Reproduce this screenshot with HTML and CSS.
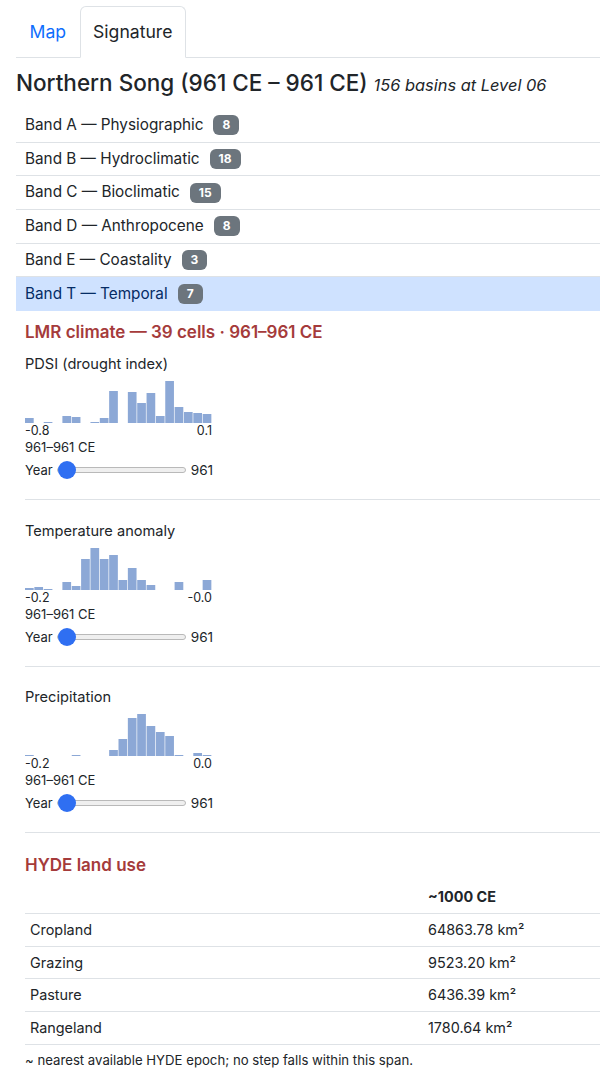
FILE: index.html
```html
<!DOCTYPE html>
<html lang="en">
<head>
    <meta charset="UTF-8">
    <meta name="viewport" content="width=device-width, initial-scale=1.0">
    <title>Northern Song - Signature</title>
    <link rel="stylesheet" href="styles.css">
</head>
<body>
    <ul class="tabs">
        <li><a href="#" class="tab-link">Map</a></li>
        <li><a href="#" class="tab-link active">Signature</a></li>
    </ul>

    <h4 class="title">Northern Song (961 CE – 961 CE) <small class="subtitle">156 basins at Level 06</small></h4>

    <ul class="bands">
        <li class="band">Band A — Physiographic<span class="badge">8</span></li>
        <li class="band">Band B — Hydroclimatic<span class="badge">18</span></li>
        <li class="band">Band C — Bioclimatic<span class="badge">15</span></li>
        <li class="band">Band D — Anthropocene<span class="badge">8</span></li>
        <li class="band">Band E — Coastality<span class="badge">3</span></li>
        <li class="band active">Band T — Temporal<span class="badge">7</span></li>
    </ul>

    <div class="temporal">
        <h6 class="section-title">LMR climate — 39 cells · 961–961 CE</h6>

        <div class="var-block">
            <div class="var-label">PDSI (drought index)</div>
            <svg class="hist" width="187" height="44" viewBox="0 0 187 44">
                <rect x="0" y="39" width="8.7" height="5"/>
                <rect x="18.7" y="43" width="8.7" height="1"/>
                <rect x="37.4" y="37" width="8.7" height="7"/>
                <rect x="46.75" y="38" width="8.7" height="6"/>
                <rect x="65.45" y="43" width="8.7" height="1"/>
                <rect x="74.8" y="39" width="8.7" height="5"/>
                <rect x="84.15" y="12" width="8.7" height="32"/>
                <rect x="102.85" y="13" width="8.7" height="31"/>
                <rect x="112.2" y="24" width="8.7" height="20"/>
                <rect x="121.55" y="14" width="8.7" height="30"/>
                <rect x="130.9" y="37" width="8.7" height="7"/>
                <rect x="140.25" y="2" width="8.7" height="42"/>
                <rect x="149.6" y="28" width="8.7" height="16"/>
                <rect x="158.95" y="33" width="8.7" height="11"/>
                <rect x="168.3" y="34" width="8.7" height="10"/>
                <rect x="177.65" y="35" width="8.7" height="9"/>
            </svg>
            <div class="axis"><span>-0.8</span><span>0.1</span></div>
            <div class="range-label">961–961 CE</div>
            <div class="year-row">
                <span>Year</span>
                <input type="range" class="year-slider" min="961" max="961" value="961">
                <span class="year-value">961</span>
            </div>
        </div>

        <div class="var-block">
            <div class="var-label">Temperature anomaly</div>
            <svg class="hist" width="187" height="44" viewBox="0 0 187 44">
                <rect x="0" y="42" width="8.7" height="2"/>
                <rect x="9.35" y="41" width="8.7" height="3"/>
                <rect x="18.7" y="43" width="8.7" height="1"/>
                <rect x="37.4" y="36" width="8.7" height="8"/>
                <rect x="46.75" y="40" width="8.7" height="4"/>
                <rect x="56.1" y="13" width="8.7" height="31"/>
                <rect x="65.45" y="2" width="8.7" height="42"/>
                <rect x="74.8" y="13" width="8.7" height="31"/>
                <rect x="84.15" y="9" width="8.7" height="35"/>
                <rect x="93.5" y="34" width="8.7" height="10"/>
                <rect x="102.85" y="22" width="8.7" height="22"/>
                <rect x="112.2" y="34" width="8.7" height="10"/>
                <rect x="121.55" y="39" width="8.7" height="5"/>
                <rect x="149.6" y="36" width="8.7" height="8"/>
                <rect x="177.65" y="34" width="8.7" height="10"/>
            </svg>
            <div class="axis"><span>-0.2</span><span>-0.0</span></div>
            <div class="range-label">961–961 CE</div>
            <div class="year-row">
                <span>Year</span>
                <input type="range" class="year-slider" min="961" max="961" value="961">
                <span class="year-value">961</span>
            </div>
        </div>

        <div class="var-block">
            <div class="var-label">Precipitation</div>
            <svg class="hist" width="187" height="44" viewBox="0 0 187 44">
                <rect x="0" y="43" width="8.7" height="1"/>
                <rect x="46.75" y="43" width="8.7" height="1"/>
                <rect x="84.15" y="38" width="8.7" height="6"/>
                <rect x="93.5" y="27" width="8.7" height="17"/>
                <rect x="102.85" y="6" width="8.7" height="38"/>
                <rect x="112.2" y="2" width="8.7" height="42"/>
                <rect x="121.55" y="14" width="8.7" height="30"/>
                <rect x="130.9" y="20" width="8.7" height="24"/>
                <rect x="140.25" y="24" width="8.7" height="20"/>
                <rect x="149.6" y="43" width="8.7" height="1"/>
                <rect x="168.3" y="41" width="8.7" height="3"/>
                <rect x="177.65" y="43" width="8.7" height="1"/>
            </svg>
            <div class="axis"><span>-0.2</span><span>0.0</span></div>
            <div class="range-label">961–961 CE</div>
            <div class="year-row">
                <span>Year</span>
                <input type="range" class="year-slider" min="961" max="961" value="961">
                <span class="year-value">961</span>
            </div>
        </div>

        <h6 class="section-title hyde-title">HYDE land use</h6>
        <table class="hyde">
            <thead>
                <tr><th class="col-label"></th><th>~1000 CE</th></tr>
            </thead>
            <tbody>
                <tr><td>Cropland</td><td>64863.78 km²</td></tr>
                <tr><td>Grazing</td><td>9523.20 km²</td></tr>
                <tr><td>Pasture</td><td>6436.39 km²</td></tr>
                <tr><td>Rangeland</td><td>1780.64 km²</td></tr>
            </tbody>
        </table>
        <p class="note">~ nearest available HYDE epoch; no step falls within this span.</p>
    </div>
</body>
</html>
```

FILE: styles.css
```css
body {
    font-family: Inter, "Liberation Sans", Arial, sans-serif;
    margin: 0;
    padding: 6px 0 0 16px;
    background-color: #fff;
    color: #212529;
}

.tabs {
    display: flex;
    list-style: none;
    margin: 0;
    padding: 0;
    border-bottom: 1px solid #dee2e6;
}

.tab-link {
    display: block;
    padding: 12px 12.5px;
    line-height: 26px;
    font-size: 17.6px;
    color: #0d6efd;
    text-decoration: none;
    border: 1px solid transparent;
    border-radius: 6px 6px 0 0;
    margin-bottom: -1px;
}

.tab-link.active {
    color: #212529;
    background-color: #fff;
    border-color: #dee2e6 #dee2e6 #fff;
}

.title {
    margin: 11px 0 10px;
    font-size: 22.5px;
    font-weight: 500;
    line-height: 28px;
}

.subtitle {
    font-size: 16.4px;
    font-weight: 400;
    font-style: italic;
}

.bands {
    list-style: none;
    margin: 0;
    padding: 0;
}

.band {
    display: flex;
    align-items: center;
    padding: 6px 9px;
    line-height: 20.67px;
    font-size: 15.3px;
    border-bottom: 1px solid #dee2e6;
}

.band.active {
    background-color: #cfe2ff;
    color: #052c65;
    border-bottom: none;
    height: 21.67px;
}

.badge {
    margin-left: 10px;
    background-color: #6c757d;
    color: #fff;
    font-size: 12px;
    font-weight: 700;
    line-height: 12px;
    padding: 4px 9px;
    border-radius: 6px;
}

.temporal {
    padding-left: 9px;
}

.section-title {
    margin: 11px 0 0;
    font-size: 17px;
    font-weight: 600;
    line-height: 20px;
    color: #a53b3b;
}

.var-block {
    padding: 21.5px 0 19px;
    border-bottom: 1px solid #dee2e6;
}

.section-title + .var-block {
    padding-top: 13px;
}

.var-label {
    font-size: 14.6px;
    line-height: 18px;
    margin-bottom: 6px;
}

.hist {
    display: block;
    fill: #8ca8d6;
}

.axis {
    display: flex;
    justify-content: space-between;
    width: 187px;
    margin-top: 1px;
    font-size: 12.5px;
    line-height: 14px;
}

.range-label {
    margin-top: 1px;
    font-size: 13px;
    line-height: 16px;
}

.year-row {
    display: flex;
    align-items: center;
    gap: 4px;
    margin-top: 5px;
    height: 20px;
    font-size: 13px;
}

.year-value {
    margin-left: 1px;
    font-size: 13.6px;
}

.year-slider {
    -webkit-appearance: none;
    appearance: none;
    width: 129px;
    height: 18px;
    margin: 0;
    background: transparent;
}

.year-slider::-webkit-slider-runnable-track {
    height: 6px;
    background-color: #efefef;
    border: 1px solid #b9b9b9;
    border-radius: 4px;
}

.year-slider::-webkit-slider-thumb {
    -webkit-appearance: none;
    width: 18px;
    height: 18px;
    margin-top: -7px;
    border-radius: 50%;
    background-color: #2f6ff2;
    border: none;
}

.hyde-title {
    margin-top: 22px;
}

.hyde {
    width: 100%;
    margin-top: 5px;
    border-collapse: collapse;
    font-size: 14.4px;
}

.hyde th,
.hyde td {
    text-align: left;
    padding: 8px 5px;
    line-height: 15.67px;
    border-bottom: 1px solid #dee2e6;
}

.hyde th {
    line-height: 17px;
    font-weight: 700;
}

.col-label {
    width: 388px;
}

.note {
    margin: 7px 0 0;
    font-size: 13.2px;
    line-height: 16px;
}
```
